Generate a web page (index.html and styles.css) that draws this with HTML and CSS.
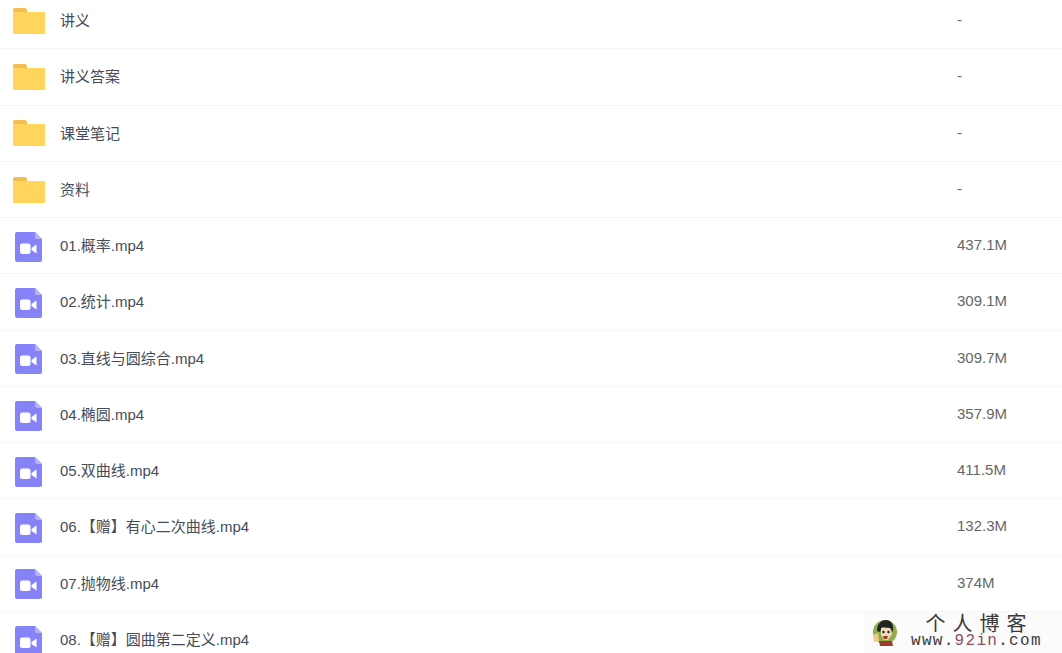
FILE: index.html
```html
<!DOCTYPE html>
<html lang="zh-CN">
<head>
  <meta charset="UTF-8">
  <title>文件列表</title>
  <link rel="stylesheet" href="styles.css">
</head>
<body>
  <svg class="defs" width="0" height="0">
    <symbol id="folder" viewBox="0 0 32 26">
      <path d="M0 2a2 2 0 0 1 2-2h9.500a2.500 2.500 0 0 1 2.500 2v2H0z" fill="#f0bf50"/>
      <path d="M0 5a1 1 0 0 1 1-1h30a1 1 0 0 1 1 1v20a1 1 0 0 1-1 1H1a1 1 0 0 1-1-1z" fill="#ffd55c"/>
    </symbol>
    <symbol id="video" viewBox="0 0 27 30">
      <path d="M2 0h18l7 7v21a2 2 0 0 1-2 2H2a2 2 0 0 1-2-2V2a2 2 0 0 1 2-2z" fill="#8583f7"/>
      <path d="M20 0l7 7h-5a2 2 0 0 1-2-2z" fill="#b5b4fa"/>
      <rect x="5" y="11.500" width="10.500" height="10.500" rx="2" fill="#fff"/>
      <path d="M16.500 16l5-3.500v9l-5-3.500z" fill="#fff"/>
    </symbol>
  </svg>

  <ul class="file-list">
    <li class="row"><svg class="icon-folder"><use href="#folder"/></svg><span class="name">讲义</span><span class="size">-</span></li>
    <li class="row"><svg class="icon-folder"><use href="#folder"/></svg><span class="name">讲义答案</span><span class="size">-</span></li>
    <li class="row"><svg class="icon-folder"><use href="#folder"/></svg><span class="name">课堂笔记</span><span class="size">-</span></li>
    <li class="row"><svg class="icon-folder"><use href="#folder"/></svg><span class="name">资料</span><span class="size">-</span></li>
    <li class="row"><svg class="icon-video"><use href="#video"/></svg><span class="name">01.概率.mp4</span><span class="size">437.1M</span></li>
    <li class="row"><svg class="icon-video"><use href="#video"/></svg><span class="name">02.统计.mp4</span><span class="size">309.1M</span></li>
    <li class="row"><svg class="icon-video"><use href="#video"/></svg><span class="name">03.直线与圆综合.mp4</span><span class="size">309.7M</span></li>
    <li class="row"><svg class="icon-video"><use href="#video"/></svg><span class="name">04.椭圆.mp4</span><span class="size">357.9M</span></li>
    <li class="row"><svg class="icon-video"><use href="#video"/></svg><span class="name">05.双曲线.mp4</span><span class="size">411.5M</span></li>
    <li class="row"><svg class="icon-video"><use href="#video"/></svg><span class="name">06.【赠】有心二次曲线.mp4</span><span class="size">132.3M</span></li>
    <li class="row"><svg class="icon-video"><use href="#video"/></svg><span class="name">07.抛物线.mp4</span><span class="size">374M</span></li>
    <li class="row"><svg class="icon-video"><use href="#video"/></svg><span class="name">08.【赠】圆曲第二定义.mp4</span><span class="size"></span></li>
  </ul>

  <div class="watermark">
    <svg class="avatar" viewBox="0 0 26 28">
      <circle cx="13" cy="13" r="12" fill="#8fae4a"/>
      <path d="M5 12c0-7 4-11 9-11s8 4 7 12l-3-4-8-1-2 5z" fill="#222"/>
      <path d="M9 9l9 0 2 6-4 6h-4l-3-5z" fill="#f3d9b8"/>
      <path d="M11 17h5l-1 3h-3z" fill="#9a3f2e"/>
      <path d="M7 22h13l1 5H8z" fill="#9a3f2e"/>
      <path d="M1 16l5-2 1 8-5 1z" fill="#f2c98a"/>
      <circle cx="11.500" cy="13" r="1.200" fill="#222"/>
      <circle cx="16.500" cy="13" r="1.200" fill="#222"/>
    </svg>
    <div class="brand">
      <div class="brand-title">个人博客</div>
      <div class="brand-url">www.<span class="brand-num">92in</span>.com</div>
    </div>
  </div>
</body>
</html>
```

FILE: styles.css
```css
html, body {
  height: 100%;
  overflow: hidden;
}
body {
  margin: 0;
  background: #fff;
  font-family: "Liberation Sans", "Noto Sans CJK SC", sans-serif;
  font-size: 15px;
  color: #454d5a;
}
.defs {
  position: absolute;
}
.file-list {
  list-style: none;
  margin: -7px 0 0;
  padding: 0;
}
.row {
  display: flex;
  align-items: center;
  box-sizing: border-box;
  height: 56.25px;
  border-bottom: 1px solid #f5f6fc;
}
.icon-folder {
  width: 32px;
  height: 26px;
  margin-left: 13px;
  margin-right: 15px;
  margin-top: 0.5px;
  flex: none;
}
.icon-video {
  width: 27px;
  height: 30px;
  margin-left: 15px;
  margin-right: 18px;
  margin-top: 2.5px;
  flex: none;
}
.name {
  flex: 1;
  margin-top: -2px;
}
.size {
  width: 105px;
  margin-top: -2px;
  color: #666;
}
.watermark {
  position: absolute;
  right: 0;
  bottom: 0;
  width: 197px;
  height: 41px;
  display: flex;
  align-items: center;
  background: #fbfbfb;
}
.avatar {
  width: 26px;
  height: 28px;
  margin-left: 7px;
  margin-right: 14px;
  flex: none;
}
.brand {
  margin-left: -1px;
  margin-top: -3px;
  color: #3a3a3a;
  text-align: center;
}
.brand-title {
  padding-left: 6px;
  font-family: "Liberation Serif", "Noto Sans CJK SC", serif;
  font-size: 20px;
  line-height: 20px;
  letter-spacing: 7px;
}
.brand-url {
  font-family: "Liberation Mono", monospace;
  font-size: 16px;
  line-height: 14px;
  letter-spacing: 1.300px;
}
.brand-num {
  color: #8a5060;
}
```
